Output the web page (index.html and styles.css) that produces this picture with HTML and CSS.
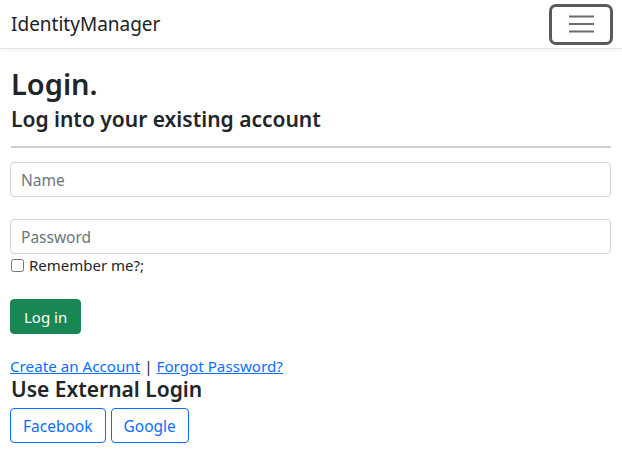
FILE: index.html
```html
<!DOCTYPE html>
<html>
<head>
<meta charset="utf-8">
<link rel="stylesheet" href="styles.css">
</head>
<body>
<header class="navbar">
  <span class="brand">IdentityManager</span>
  <button class="toggler" aria-label="Toggle navigation">
    <svg width="25" height="18" viewBox="0 0 25 18"><path d="M0 1.5H25M0 9H25M0 16.5H25" stroke="#6b6b6b" stroke-width="2"/></svg>
  </button>
</header>
<main class="content">
  <h1 class="title">Login.</h1>
  <h2 class="subtitle">Log into your existing account</h2>
  <hr class="rule">
  <form class="form">
    <input class="field" type="text" placeholder="Name">
    <input class="field pw" type="password" placeholder="Password">
    <label class="remember"><input type="checkbox" class="check"> Remember me?;</label>
    <button type="button" class="btn-login">Log in</button>
  </form>
  <p class="links"><a href="#">Create an Account</a> | <a href="#">Forgot Password?</a></p>
  <h3 class="ext-title">Use External Login</h3>
  <div class="ext">
    <button type="button" class="btn-outline">Facebook</button>
    <button type="button" class="btn-outline">Google</button>
  </div>
</main>
</body>
</html>
```
FILE: styles.css
```css
* { box-sizing: border-box; }
body {
  margin: 0;
  font-family: "Noto Sans", "Open Sans", sans-serif;
  color: #212529;
  background: #fff;
}
.navbar {
  height: 49px;
  display: flex;
  align-items: center;
  justify-content: space-between;
  padding: 0 9px 0 11px;
  border-bottom: 1px solid #e5e5e5;
  box-shadow: 0 2px 4px rgba(0,0,0,0.05);
}
.brand {
  font-size: 19px;
  color: #222;
}
.toggler {
  width: 64px;
  height: 41px;
  border: 3px solid #5a5a5a;
  border-radius: 7px;
  background: #fff;
  display: flex;
  align-items: center;
  justify-content: center;
  padding: 0;
}
.content {
  padding: 0 11px 0 10px;
}
.title {
  margin: 17px 0 0 1px;
  font-size: 29px;
  font-weight: 600;
  line-height: 36px;
}
.subtitle {
  margin: 3px 0 0 1px;
  font-size: 21px;
  font-weight: 600;
  line-height: 28px;
}
.rule {
  margin: 13px 0 0 1px;
  border: 0;
  border-top: 2px solid #cfcfcf;
}
.form {
  display: flex;
  flex-direction: column;
  align-items: flex-start;
  margin-top: 14px;
}
.field {
  width: 100%;
  height: 35px;
  border: 1px solid #ced4da;
  border-radius: 4px;
  padding: 0 10px;
  font-family: inherit;
  font-size: 15.5px;
  color: #212529;
}
.field::placeholder { color: #6c757d; }
.pw { margin-top: 22px; }
.remember {
  display: flex;
  align-items: center;
  gap: 5px;
  font-size: 15px;
  margin-top: 1px;
  height: 20px;
}
.check {
  margin: 0 0 0 1px;
  width: 13px;
  height: 13px;
}
.btn-login {
  margin-top: 24px;
  height: 35px;
  padding: 0 13px;
  background: #198754;
  color: #fff;
  border: 1px solid #198754;
  border-radius: 4px;
  font-family: inherit;
  font-size: 15px;
}
.links {
  margin: 23px 0 0;
  font-size: 15.2px;
  line-height: 18px;
}
.links a { color: #0d6efd; }
.ext-title {
  margin: 1px 0 0 1px;
  font-size: 21px;
  font-weight: 600;
  line-height: 26px;
}
.ext {
  display: flex;
  gap: 5px;
  margin-top: 6px;
}
.btn-outline {
  height: 35px;
  padding: 0 12px;
  background: #fff;
  color: #0d6efd;
  border: 1px solid #0d6efd;
  border-radius: 4px;
  font-family: inherit;
  font-size: 15.5px;
}
```
